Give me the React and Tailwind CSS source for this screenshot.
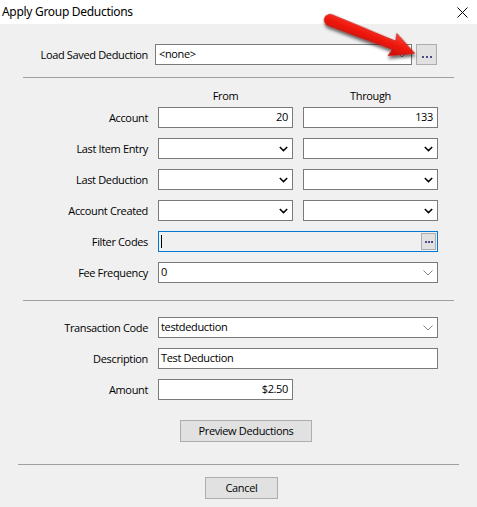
import React from "react";

function Chevron({ gray }) {
  return gray ? (
    <svg width="10" height="6" viewBox="0 0 10 6" className="shrink-0">
      <path d="M0.5 0.5 L5 5 L9.5 0.5" fill="none" stroke="#858585" strokeWidth="1" />
    </svg>
  ) : (
    <svg width="9" height="6" viewBox="0 0 9 6" className="shrink-0">
      <path d="M0.8 1 L4.5 4.6 L8.2 1" fill="none" stroke="#000" strokeWidth="1.5" />
    </svg>
  );
}

function Label({ children }) {
  return <div className="w-[148px] shrink-0 text-right leading-[21px]">{children}</div>;
}

function Dots({ className }) {
  return (
    <div className={`flex items-end justify-center ${className}`}>
      <span className="w-[2px] h-[2px] bg-[#4a4a8a]" />
      <span className="w-[2px] h-[2px] bg-[#4a4a8a]" />
      <span className="w-[2px] h-[2px] bg-[#4a4a8a]" />
    </div>
  );
}

function Combo({ w, value, gray }) {
  return (
    <div className={`${w} h-[21px] bg-white border border-[#7a7a7a] flex items-center justify-between pl-[2px] pr-[4px]`}>
      <span>{value}</span>
      <Chevron gray={gray} />
    </div>
  );
}

export default function App() {
  return (
    <div className="w-[477px] h-[507px] bg-[#f0f0f0] relative overflow-hidden text-[11px] tracking-[-0.35px] text-black font-['Open_Sans',sans-serif]">
      {/* title bar */}
      <div className="h-[24px] bg-white flex items-center justify-between pl-[2px] pr-[9px]">
        <span className="text-[12px] tracking-[-0.3px] font-['Noto_Sans',sans-serif]">Apply Group Deductions</span>
        <svg width="11" height="11" viewBox="0 0 11 11">
          <path d="M0.5 0.5 L10.5 10.5 M10.5 0.5 L0.5 10.5" stroke="#000" strokeWidth="1" />
        </svg>
      </div>

      {/* load saved */}
      <div className="mt-[20px] flex items-center">
        <Label>Load Saved Deduction</Label>
        <div className="ml-[7px] w-[257px] h-[21px] bg-white border border-[#7a7a7a] flex items-center justify-between pl-[3px] pr-[4px]">
          <span>&lt;none&gt;</span>
          <Chevron gray />
        </div>
        <div className="ml-[4px] w-[21px] h-[21px] bg-[#e1e1e1] border border-[#adadad] flex items-center justify-center pt-[4px]">
          <Dots className="gap-[2px]" />
        </div>
      </div>

      <div className="mt-[12px] mx-[23px] h-px bg-[#a0a0a0]" />

      {/* headers */}
      <div className="mt-[10px] h-[16px] flex items-center">
        <div className="ml-[158px] w-[135px] text-center">From</div>
        <div className="ml-[10px] w-[135px] text-center">Through</div>
      </div>

      <div className="mt-[3px] flex flex-col gap-[10px]">
        <div className="flex items-center">
          <Label>Account</Label>
          <div className="ml-[10px] flex gap-[10px]">
            <div className="w-[135px] h-[21px] bg-white border border-[#7a7a7a] flex items-center justify-end pr-[4px]">20</div>
            <div className="w-[135px] h-[21px] bg-white border border-[#7a7a7a] flex items-center justify-end pr-[4px]">133</div>
          </div>
        </div>
        <div className="flex items-center">
          <Label>Last Item Entry</Label>
          <div className="ml-[10px] flex gap-[10px]">
            <Combo w="w-[135px]" />
            <Combo w="w-[135px]" />
          </div>
        </div>
        <div className="flex items-center">
          <Label>Last Deduction</Label>
          <div className="ml-[10px] flex gap-[10px]">
            <Combo w="w-[135px]" />
            <Combo w="w-[135px]" />
          </div>
        </div>
        <div className="flex items-center">
          <Label>Account Created</Label>
          <div className="ml-[10px] flex gap-[10px]">
            <Combo w="w-[135px]" />
            <Combo w="w-[135px]" />
          </div>
        </div>
        <div className="flex items-center">
          <Label>Filter Codes</Label>
          <div className="ml-[10px] w-[280px] h-[21px] bg-[#f0f0f0] border border-[#0078d7] flex items-center justify-between pl-[2px] pr-px">
            <span className="w-px h-[13px] bg-black" />
            <div className="w-[15px] h-[17px] bg-[#e1e1e1] border border-[#adadad] flex items-center justify-center">
              <Dots className="gap-px" />
            </div>
          </div>
        </div>
        <div className="flex items-center">
          <Label>Fee Frequency</Label>
          <div className="ml-[10px]">
            <Combo w="w-[280px]" value="0" gray />
          </div>
        </div>
      </div>

      <div className="mt-[17px] mx-[23px] h-px bg-[#a0a0a0]" />

      <div className="mt-[16px] flex flex-col gap-[10px]">
        <div className="flex items-center">
          <Label>Transaction Code</Label>
          <div className="ml-[10px]">
            <Combo w="w-[280px]" value="testdeduction" gray />
          </div>
        </div>
        <div className="flex items-center">
          <Label>Description</Label>
          <div className="ml-[10px] w-[280px] h-[21px] bg-white border border-[#7a7a7a] flex items-center pl-[2px]">Test Deduction</div>
        </div>
        <div className="flex items-center">
          <Label>Amount</Label>
          <div className="ml-[10px] w-[135px] h-[21px] bg-white border border-[#7a7a7a] flex items-center justify-end pr-[4px]">$2.50</div>
        </div>
      </div>

      <div className="mt-[20px] ml-[180px] w-[132px] h-[22px] bg-[#e1e1e1] border border-[#adadad] flex items-center justify-center">
        Preview Deductions
      </div>

      <div className="mt-[22px] mx-[18px] h-px bg-[#a0a0a0]" />

      <div className="mt-[12px] ml-[205px] w-[73px] h-[22px] bg-[#e1e1e1] border border-[#adadad] flex items-center justify-center">
        Cancel
      </div>

      {/* red annotation arrow */}
      <svg className="absolute left-[318px] top-[6px] pointer-events-none" width="112" height="60" viewBox="0 0 112 60">
        <defs>
          <filter id="sh" x="-20%" y="-40%" width="140%" height="180%">
            <feDropShadow dx="1.5" dy="2.5" stdDeviation="1.6" floodColor="#000" floodOpacity="0.6" />
          </filter>
          <linearGradient id="rg" x1="0" y1="-12" x2="0" y2="12" gradientUnits="userSpaceOnUse">
            <stop offset="0" stopColor="#ff4636" />
            <stop offset="0.45" stopColor="#f01a10" />
            <stop offset="1" stopColor="#c80a06" />
          </linearGradient>
        </defs>
        <g transform="translate(12 14) rotate(21.5)" filter="url(#sh)">
          <path
            d="M0 -5.8 L69 -4.4 L67 -12 L91 0 L67 12 L69 4.4 L0 5.8 A5.8 5.8 0 0 1 0 -5.8 Z"
            fill="url(#rg)"
            stroke="#b80806"
            strokeWidth="0.6"
            strokeLinejoin="round"
          />
        </g>
      </svg>
    </div>
  );
}
